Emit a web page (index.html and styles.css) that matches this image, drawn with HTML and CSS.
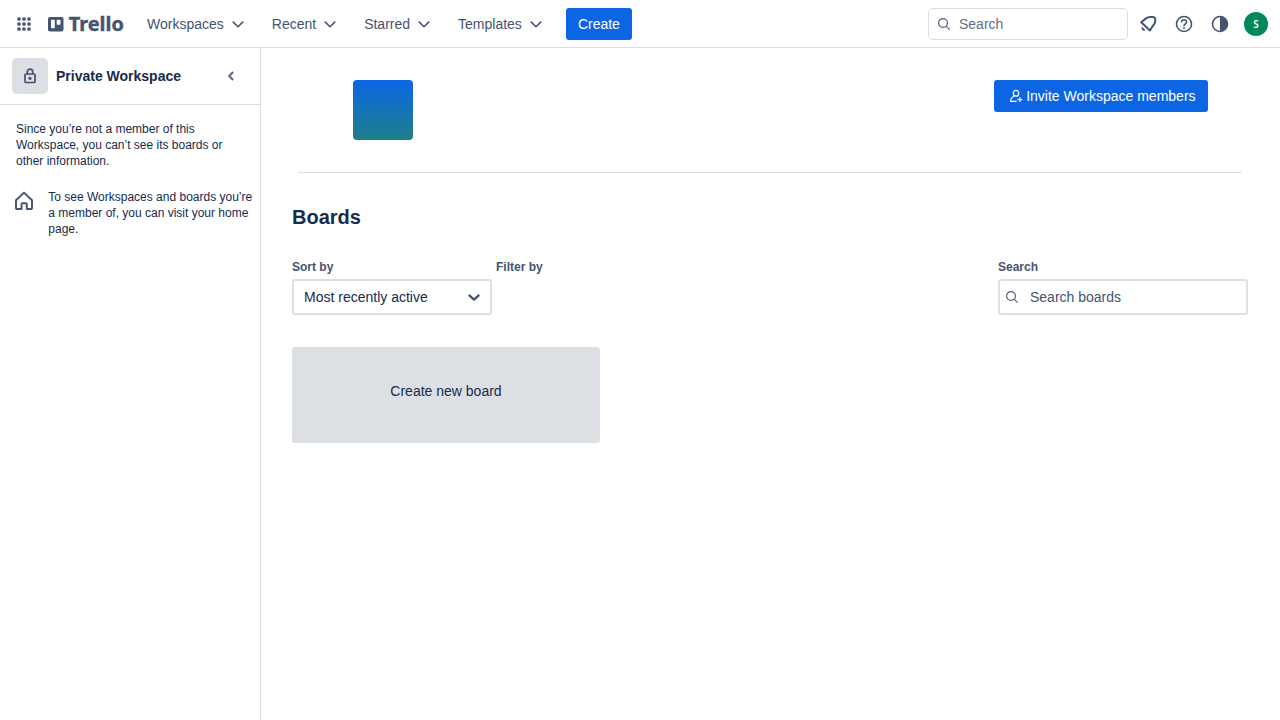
FILE: index.html
```html
<!DOCTYPE html>
<html lang="en">
<head>
<meta charset="utf-8">
<title>Boards | Trello</title>
<link rel="stylesheet" href="styles.css">
</head>
<body>
<header class="header">
  <svg class="apps" width="16" height="16" viewBox="0 0 16 16" fill="currentColor"><circle cx="3" cy="3" r="1.850"/><circle cx="8" cy="3" r="1.850"/><circle cx="13" cy="3" r="1.850"/><circle cx="3" cy="8" r="1.850"/><circle cx="8" cy="8" r="1.850"/><circle cx="13" cy="8" r="1.850"/><circle cx="3" cy="13" r="1.850"/><circle cx="8" cy="13" r="1.850"/><circle cx="13" cy="13" r="1.850"/></svg>
  <svg class="logo" width="78" height="24" viewBox="0 0 78 24"><path fill="currentColor" fill-rule="evenodd" d="M2 5H13.500A2 2 0 0 1 15.500 7V17.500A2 2 0 0 1 13.500 19.500H2A2 2 0 0 1 0 17.500V7A2 2 0 0 1 2 5ZM3.700 7.800A.7.7 0 0 0 3 8.500V15.500A.7.7 0 0 0 3.700 16.200H6.100A.7.7 0 0 0 6.800 15.500V8.500A.7.7 0 0 0 6.100 7.800ZM9.400 7.800A.7.7 0 0 0 8.700 8.500V12A.7.7 0 0 0 9.400 12.700H11.800A.7.7 0 0 0 12.500 12V8.500A.7.7 0 0 0 11.800 7.800Z"/><text class="wordmark" x="20.800" y="19.400" textLength="55" lengthAdjust="spacingAndGlyphs">Trello</text></svg>
  <nav class="nav">
    <a class="nav-item">Workspaces<svg width="16" height="16" viewBox="0 0 16 16"><path class="line" d="M2.800 5.600L8 10.700L13.200 5.600"/></svg></a>
    <a class="nav-item">Recent<svg width="16" height="16" viewBox="0 0 16 16"><path class="line" d="M2.800 5.600L8 10.700L13.200 5.600"/></svg></a>
    <a class="nav-item">Starred<svg width="16" height="16" viewBox="0 0 16 16"><path class="line" d="M2.800 5.600L8 10.700L13.200 5.600"/></svg></a>
    <a class="nav-item">Templates<svg width="16" height="16" viewBox="0 0 16 16"><path class="line" d="M2.800 5.600L8 10.700L13.200 5.600"/></svg></a>
  </nav>
  <a class="button create">Create</a>
  <div class="search"><svg width="16" height="16" viewBox="0 0 16 16"><g class="thin"><circle cx="7" cy="7" r="4.400"/><path d="M10.200 10.200L13.600 13.600"/></g></svg>Search</div>
  <div class="tools">
    <svg width="24" height="24" viewBox="0 0 24 24"><path class="line bell" d="M5.200 10.300L14 18.400L16.200 14.800L18.500 11.700Q19.200 10.400 19.200 8.500V6.500L17.600 5.100H14.300Q11.700 5.100 10 6.400Z"/><path d="M5.900 14.700L9.400 18C8.700 19 7.300 18.900 6.500 18.100C5.600 17.200 5.300 15.800 5.900 14.700Z" fill="currentColor"/></svg>
    <svg width="24" height="24" viewBox="0 0 24 24"><circle class="line" cx="12" cy="12" r="7.500"/><path class="line" d="M9.500 10.300C9.500 6.800 14.600 7 14.600 10C14.600 11.900 12 11.900 12 14"/><circle cx="12" cy="16" r="1" fill="currentColor"/></svg>
    <svg width="24" height="24" viewBox="0 0 24 24"><circle class="line" cx="12" cy="12" r="7.500"/><path d="M12 4.500A7.500 7.500 0 0 1 12 19.500Z" fill="currentColor"/></svg>
    <span class="avatar">S</span>
  </div>
</header>
<div class="body">
  <aside class="sidebar">
    <div class="workspace">
      <span class="lock"><svg width="20" height="20" viewBox="0 0 20 20"><rect class="line lock-line" x="5" y="8" width="10" height="8.500" rx="1"/><path class="line lock-line" d="M7.300 8V5.800C7.300 2.300 12.700 2.300 12.700 5.800V8"/><circle cx="10" cy="12.300" r="1.600" fill="currentColor"/></svg></span>
      <strong class="workspace-name">Private Workspace</strong>
      <svg class="collapse" width="16" height="16" viewBox="0 0 16 16"><path class="heavy" d="M10.100 4L6.200 8L10.100 12"/></svg>
    </div>
    <p class="notice">Since you’re not a member of this Workspace, you can’t see its boards or other information.</p>
    <div class="home"><svg width="24" height="24" viewBox="0 0 24 24"><path class="house" d="M4 11.300L12 3.600L20 11.300V19.200Q20 20 19.200 20H14.800V15.200Q14.800 14.200 13.800 14.200H10.500Q9.500 14.200 9.500 15.200V20H4.800Q4 20 4 19.200Z"/></svg><p class="home-text">To see Workspaces and boards you’re a member of, you can visit your home page.</p></div>
  </aside>
  <main class="main">
    <section class="banner"><div class="tile"></div><a class="button invite"><svg width="16" height="16" viewBox="0 0 16 16"><g class="invite-icon"><ellipse cx="8" cy="5.300" rx="2.700" ry="2.900"/><path d="M6.600 8C4 8.900 2.600 10.600 2.600 13.300H8.500M9 8.200L9.800 8.700M11.900 9.300V14.100M9.500 11.700H14.300"/></g></svg>Invite Workspace members</a></section>
    <h1 class="title">Boards</h1>
    <div class="controls">
      <div class="sort"><div class="label">Sort by</div><div class="field select">Most recently active<svg width="16" height="16" viewBox="0 0 16 16"><path class="heavy" d="M2.800 5.900L8 10.600L13.200 5.900"/></svg></div></div>
      <div class="label">Filter by</div>
      <div class="board-search"><div class="label">Search</div><div class="field find"><svg width="16" height="16" viewBox="0 0 16 16"><g class="thin"><circle cx="7" cy="7" r="4.400"/><path d="M10.200 10.200L13.600 13.600"/></g></svg>Search boards</div></div>
    </div>
    <div class="new-board">Create new board</div>
  </main>
</div>
</body>
</html>
```
FILE: styles.css
```css
* { box-sizing: border-box; }
body { margin: 0; height: 720px; overflow: hidden; display: flex; flex-direction: column; background: #fff; color: #172b4d; font: 14px/20px "Liberation Sans", Arial, sans-serif; }
svg { display: block; flex: none; }
p { margin: 0; }
.line, .thin, .heavy, .house, .invite-icon { fill: none; stroke: currentColor; stroke-width: 1.6; }
.bell { stroke-width: 2; stroke-linejoin: round; }
.lock-line { stroke-width: 1.7; }
.thin { stroke-width: 1.2; }
.heavy { stroke-width: 2.3; stroke-linejoin: round; }
.house { stroke-width: 1.9; stroke-linejoin: round; }
.invite-icon { stroke-width: 1.2; }
.header { height: 48px; flex: none; display: flex; align-items: center; padding: 0 12px 0 16px; border-bottom: 1px solid #d9dbde; color: #44546f; }
.logo { margin-left: 16px; }
.wordmark { font: 700 19px "Noto Sans", sans-serif; fill: currentColor; stroke: currentColor; stroke-width: .4px; }
.nav { display: flex; gap: 4px; margin-left: 9px; }
.nav-item { display: flex; align-items: center; gap: 6px; height: 32px; padding: 0 10px 0 12px; }
.button { height: 32px; display: flex; align-items: center; padding: 0 12px; border-radius: 3px; background: #0c66e4; color: #fff; }
.create { margin-left: 12px; }
.search { width: 200px; height: 32px; margin-left: auto; display: flex; align-items: center; gap: 7px; padding-left: 7px; border: 1px solid #d9dce1; border-radius: 5px; color: #626f86; }
.search svg, .find svg { color: #505f79; }
.tools { display: flex; gap: 12px; margin-left: 8px; }
.avatar { width: 24px; height: 24px; border-radius: 50%; background: #00875a; color: #fff; font: 600 10px/24px "Noto Sans", sans-serif; text-align: center; }
.body { flex: 1; display: flex; }
.sidebar { width: 261px; flex: none; border-right: 1px solid #d9dbe0; font-size: 12px; line-height: 16px; }
.workspace { height: 57px; display: flex; align-items: center; padding: 0 21px 0 12px; border-bottom: 1px solid #d9dbe0; }
.lock { width: 36px; height: 36px; margin-right: 8px; display: flex; align-items: center; justify-content: center; border-radius: 5px; background: #dcdfe4; color: #44546f; }
.workspace-name { font-size: 14px; }
.collapse { margin-left: auto; color: #626f86; }
.notice { padding: 16px 20px 20px 16px; }
.home { display: flex; gap: 12.300px; padding: 0 4px 0 12px; color: #172b4d; }
.home svg { color: #44546f; }
.main { flex: 1; padding: 32px 32px 0 31px; }
.banner { height: 93px; display: flex; justify-content: space-between; margin: 0 6px; padding: 0 34px 0 55px; border-bottom: 1px solid #dcdfe4; }
.tile { width: 60px; height: 60px; border-radius: 4px; background: linear-gradient(#0c66e4, #1f7f8a); }
.invite { width: 214px; gap: 2.200px; padding: 0 0 0 14px; white-space: nowrap; }
.title { margin: 32px 0 28px; font-size: 20px; line-height: 24px; }
.controls { display: flex; gap: 4px; }
.label { margin-bottom: 4px; font-size: 12px; line-height: 16px; padding-top: 2px; font-weight: 700; color: #44546f; }
.sort { width: 200px; }
.board-search { width: 250px; margin-left: auto; }
.field { height: 36px; display: flex; align-items: center; border: 2px solid #dcdfe4; border-radius: 3px; }
.select { justify-content: space-between; padding: 0 8px 0 10px; }
.select svg, .find { color: #44546f; }
.find { gap: 10px; padding-left: 4px; }
.new-board { width: 308px; height: 96px; margin-top: 32px; padding-top: 34px; border-radius: 3px; background: #dcdfe4; text-align: center; }
```
